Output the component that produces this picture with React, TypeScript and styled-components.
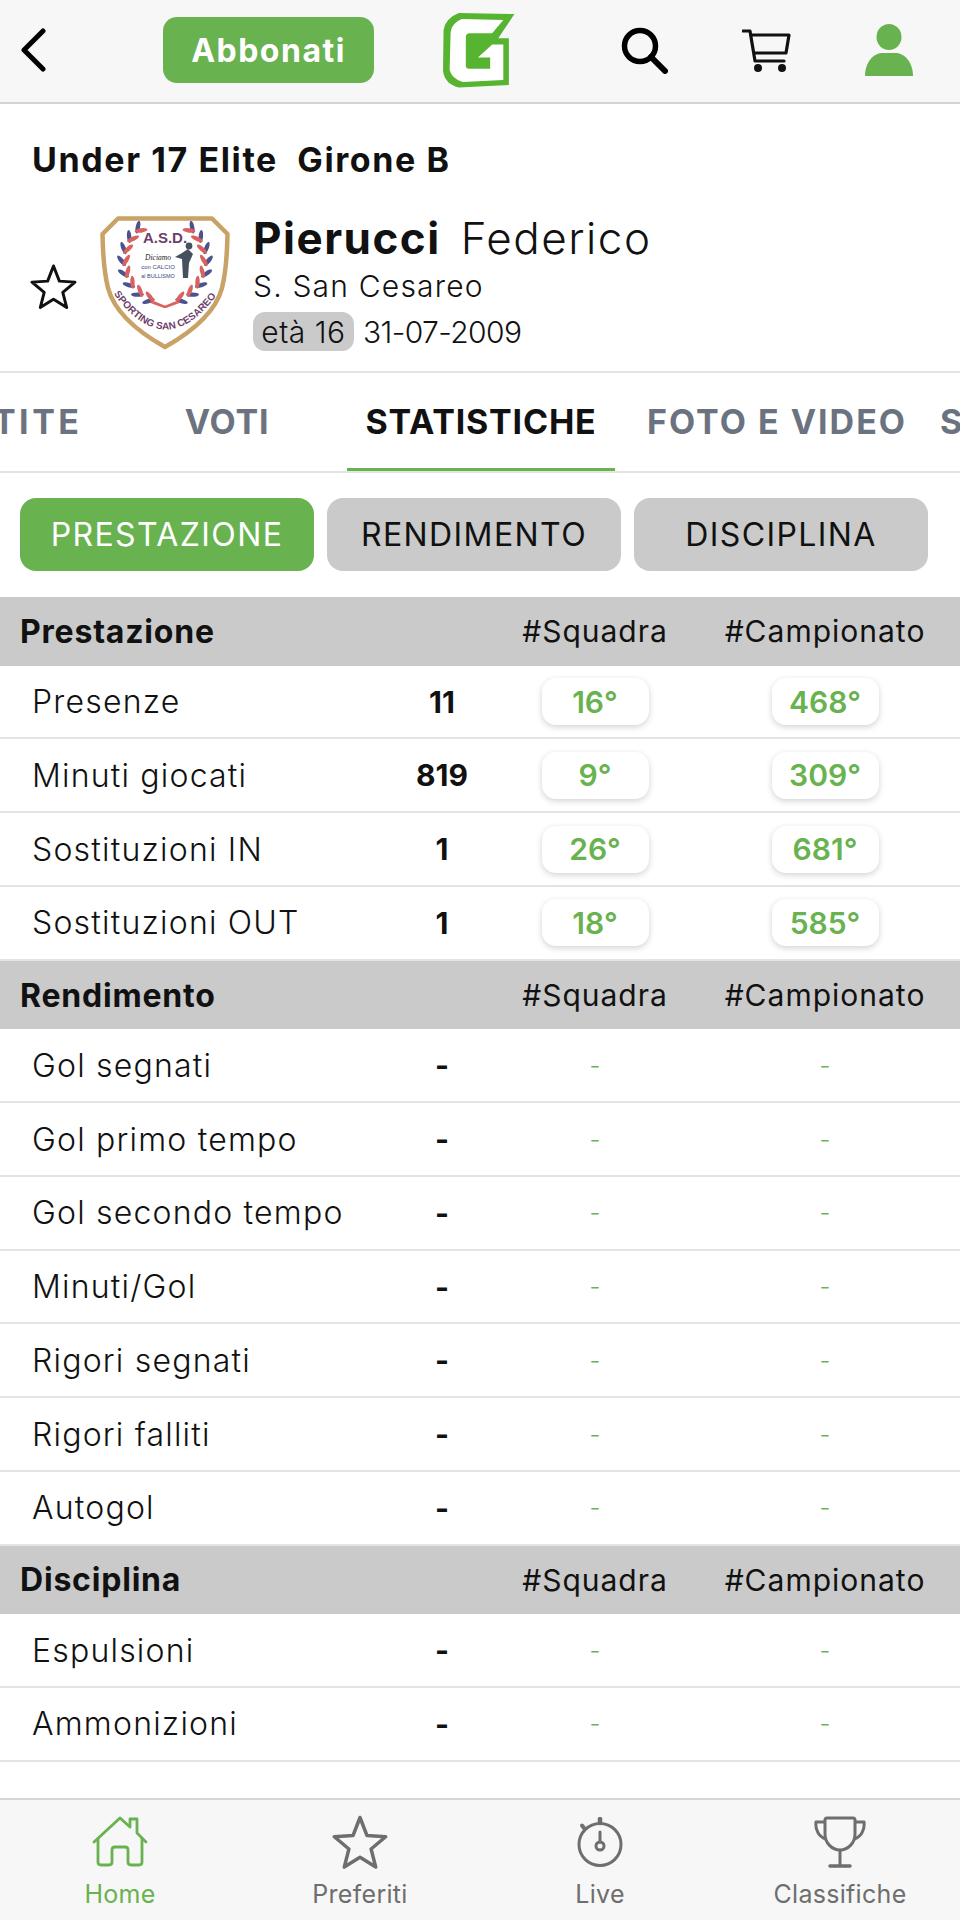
import React from 'react'
import styled, { createGlobalStyle } from 'styled-components'

const GREEN = '#69b250'
const GREY = '#cacaca'
const FONT = `Inter, "Noto Sans", "Liberation Sans", sans-serif`
const COLUMNS = '392px 100px 206px 254px'

const GlobalStyle = createGlobalStyle`
    html, body {
        margin: 0;
        padding: 0;
        background: #fff;
    }
    * {
        box-sizing: border-box;
    }
`

const Page = styled.div`
    display: flex;
    flex-direction: column;
    width: 960px;
    height: 1920px;
    overflow: hidden;
    background: #fff;
    color: #111;
    font-family: ${FONT};
`

const TopBar = styled.header`
    display: flex;
    align-items: center;
    flex: none;
    height: 104px;
    padding: 0 47px 2px 21px;
    background: #f7f7f7;
    border-bottom: 2px solid #d4d4d4;
`

const SubscribeButton = styled.div`
    display: flex;
    align-items: center;
    justify-content: center;
    width: 211px;
    height: 66px;
    margin-left: 117px;
    border-radius: 14px;
    background: ${GREEN};
    color: #fff;
    font-size: 32px;
    font-weight: 700;
    letter-spacing: 1.5px;
`

const LogoSlot = styled.div`
    display: flex;
    margin-left: 68px;
`

const TopIcons = styled.div`
    display: flex;
    align-items: center;
    gap: 74px;
    margin-left: auto;
`

const Competition = styled.h1`
    margin: 0;
    padding: 37px 0 0 32px;
    font-size: 34px;
    line-height: 38px;
    font-weight: 700;
    letter-spacing: 1.6px;
    white-space: pre;
`

const Profile = styled.section`
    display: flex;
    align-items: flex-start;
    flex: none;
    height: 194px;
    padding: 35px 0 0 30px;
    border-bottom: 2px solid #e4e4e4;
`

const StarSlot = styled.div`
    display: flex;
    margin: 49px 23px 0 0;
`

const CrestSlot = styled.div`
    display: flex;
    margin-top: 2px;
`

const Details = styled.div`
    display: flex;
    flex-direction: column;
    margin-left: 23px;
`

const PlayerName = styled.div`
    display: flex;
    gap: 20px;
    font-size: 44px;
    line-height: 48px;
    letter-spacing: 1.5px;
`

const Surname = styled.span`
    font-weight: 700;
`

const Forename = styled.span`
    font-weight: 300;
`

const TeamName = styled.div`
    margin-top: 5px;
    font-size: 30px;
    line-height: 38px;
    font-weight: 300;
    letter-spacing: 1.2px;
`

const BirthRow = styled.div`
    display: flex;
    align-items: center;
    gap: 9px;
    margin-top: 7px;
    font-size: 30px;
    font-weight: 300;
`

const AgeBadge = styled.span`
    display: flex;
    align-items: center;
    justify-content: center;
    width: 101px;
    height: 39px;
    border-radius: 12px;
    background: ${GREY};
    letter-spacing: 0.5px;
`

const BirthDate = styled.span`
    letter-spacing: -0.6px;
`

const TabStrip = styled.nav`
    display: flex;
    flex: none;
    height: 100px;
    margin-left: -109px;
    width: 1069px;
    border-bottom: 2px solid #e4e4e4;
    overflow: hidden;
`

const TabItem = styled.div<{ $active?: boolean; $wide?: boolean }>`
    display: flex;
    align-items: center;
    justify-content: center;
    flex: none;
    min-width: 240px;
    height: 100px;
    padding: ${props => props.$wide ? '2px 33px 0 32px' : '2px 18.5px 0'};
    color: ${props => props.$active ? '#111' : '#6b7280'};
    border-bottom: 5px solid ${props => props.$active ? GREEN : 'transparent'};
    font-size: 34px;
    font-weight: 700;
    letter-spacing: ${props => props.$wide ? '2px' : '0.8px'};
    white-space: nowrap;
    &:first-child {
        min-width: 216px;
        letter-spacing: 3.5px;
    }
    &:last-child {
        min-width: 0;
        padding-left: 0;
    }
`

const FilterRow = styled.div`
    display: flex;
    gap: 13px;
    flex: none;
    padding: 25px 0 26px 20px;
`

const FilterButton = styled.div<{ $active?: boolean }>`
    display: flex;
    align-items: center;
    justify-content: center;
    width: 294px;
    height: 73px;
    border-radius: 16px;
    background: ${props => props.$active ? GREEN : GREY};
    color: ${props => props.$active ? '#fff' : '#111'};
    font-size: 32px;
    font-weight: 400;
    letter-spacing: 1.4px;
`

const SectionHeader = styled.div`
    display: grid;
    grid-template-columns: ${COLUMNS};
    align-items: center;
    height: 68.7px;
    background: ${GREY};
    font-size: 30px;
    font-weight: 400;
`

const SectionTitle = styled.div`
    grid-column: 1 / 3;
    padding-left: 20px;
    font-size: 32px;
    font-weight: 700;
    letter-spacing: 0.8px;
`

const ColumnTitle = styled.div`
    text-align: center;
    letter-spacing: 1px;
`

const StatRow = styled.div`
    display: grid;
    grid-template-columns: ${COLUMNS};
    align-items: center;
    height: 73.75px;
    border-bottom: 2px solid #e4e4e4;
`

const StatLabel = styled.div`
    padding-left: 32px;
    font-size: 32px;
    font-weight: 300;
    letter-spacing: 1.2px;
    white-space: nowrap;
`

const StatValue = styled.div`
    text-align: center;
    font-size: 30px;
    font-weight: 700;
`

const RankCell = styled.div`
    display: flex;
    justify-content: center;
`

const RankPill = styled.div`
    display: flex;
    align-items: center;
    justify-content: center;
    width: 107px;
    height: 47px;
    border-radius: 14px;
    background: #fff;
    box-shadow: 0 2px 6px rgba(0, 0, 0, 0.18);
    color: ${GREEN};
    font-size: 30px;
    font-weight: 600;
`

const EmptyRank = styled.div`
    color: ${GREEN};
    font-size: 24px;
    font-weight: 300;
`

const Spacer = styled.div`
    flex: 1;
`

const BottomBar = styled.footer`
    display: grid;
    grid-template-columns: repeat(4, 240px);
    flex: none;
    height: 122px;
    background: #f7f7f7;
    border-top: 2px solid #d0d7dc;
`

const BottomItem = styled.div<{ $active?: boolean }>`
    display: flex;
    flex-direction: column;
    align-items: center;
    padding-top: 15px;
    color: ${props => props.$active ? GREEN : '#6e6e6e'};
    font-size: 25px;
    font-weight: 400;
`

const BottomIconSlot = styled.div`
    display: flex;
    align-items: center;
    height: 54px;
`

const BottomLabel = styled.div`
    margin-top: 10px;
    line-height: 30px;
    letter-spacing: 0.3px;
`

const BackIcon = () => (
    <svg width="25" height="44" viewBox="0 0 25 44" fill="none">
        <path d="M22 3 L3 22 L22 41" stroke="#000" strokeWidth="5" strokeLinecap="round" strokeLinejoin="round" />
    </svg>
)

const Logo = () => (
    <svg width="74" height="77" viewBox="13.5 7 73 76">
        <path d="M15 25 Q17 13 30 8 L85 9 L69 33 L79.5 33 L79.5 79 L30 81.5 Q16 78 14.5 65 Z" fill="#57b431" />
        <path d="M22 27 Q23 18 33 14 L74 15 L63 28 L41 28 Q37 28 37 32 L37 60 Q37 63 40 63 L61 63 L61 52 L49 52 L63 39 L74 39 L74 74 L34 76 Q23 73 21 64 Z" fill="#fff" />
    </svg>
)

const SearchIcon = () => (
    <svg width="48" height="48" viewBox="0 0 48 48" fill="none">
        <circle cx="20" cy="20" r="15.5" stroke="#000" strokeWidth="5.5" />
        <path d="M31 31 L45 45" stroke="#000" strokeWidth="6" strokeLinecap="round" />
    </svg>
)

const CartIcon = () => (
    <svg width="49" height="44" viewBox="0 0 49 44" fill="none" stroke="#111" strokeWidth="3.2" strokeLinejoin="round">
        <path d="M1 3 H8 L13 33 H42" strokeLinecap="round" />
        <path d="M9 7 H47 L44 25 H12" />
        <circle cx="16" cy="40" r="2.4" fill="#111" />
        <circle cx="40" cy="40" r="2.4" fill="#111" />
    </svg>
)

const PersonIcon = () => (
    <svg width="48" height="52" viewBox="0 0 48 52" fill={GREEN}>
        <ellipse cx="24" cy="13" rx="12.5" ry="13" />
        <path d="M0 52 C0 38 9 29 17 29 H31 C39 29 48 38 48 52 Z" />
    </svg>
)

const StarOutline = ({ size, color, width }: { size: number; color: string; width: number }) => (
    <svg width={size} height={size} viewBox="0 0 48 48" fill="none">
        <path d="M24 3 L30 18.5 L46 19.5 L33.5 30 L37.5 45.5 L24 37 L10.5 45.5 L14.5 30 L2 19.5 L18 18.5 Z"
            stroke={color} strokeWidth={width} strokeLinejoin="round" />
    </svg>
)

const HomeIcon = () => (
    <svg width="56" height="52" viewBox="0 0 56 52" fill="none" stroke={GREEN} strokeWidth="2.8" strokeLinejoin="round" strokeLinecap="round">
        <path d="M2 26 L28 2 L38 11 V3 H45 V17 L54 26" />
        <path d="M6 23 V46 Q6 49 9 49 H17 Q20 49 20 46 V34 Q20 31 23 31 H33 Q36 31 36 34 V46 Q36 49 39 49 H47 Q50 49 50 46 V23" />
    </svg>
)

const WatchIcon = () => (
    <svg width="46" height="50" viewBox="0 0 46 50" fill="none" stroke="#6e6e6e" strokeWidth="3">
        <circle cx="23" cy="27.5" r="21" />
        <path d="M23 6 V2" strokeWidth="4.5" strokeLinecap="round" />
        <path d="M7 11 L5 8.5" strokeWidth="4" strokeLinecap="round" />
        <path d="M23 15 V25" strokeLinecap="round" />
        <circle cx="23" cy="29" r="4" />
    </svg>
)

const TrophyIcon = () => (
    <svg width="52" height="52" viewBox="0 0 52 52" fill="none" stroke="#6e6e6e" strokeWidth="3" strokeLinejoin="round">
        <path d="M11 4 Q11 2 13 2 H39 Q41 2 41 4 V18 C41 27 34 34 26 34 C18 34 11 27 11 18 Z" />
        <path d="M11 6 H2 C1 14 5 21 12 23 M41 6 H50 C51 14 47 21 40 23" />
        <path d="M26 34 V49" />
        <path d="M16 50 H36" strokeWidth="3.5" strokeLinecap="round" />
    </svg>
)

// one side of the wreath, the other is the same group mirrored
const LaurelBranch = () => (
    <>
        {[0, 1, 2, 3, 4, 5, 6, 7].map(i => {
            const degrees = -47 + i * 17
            const radians = degrees * Math.PI / 180
            const x = 65 + 41 * Math.cos(radians)
            const y = 45 + 41 * Math.sin(radians)
            return (
                <g key={i} transform={`translate(${x} ${y}) rotate(${degrees})`}>
                    <ellipse cx="4" cy="0" rx="6.5" ry="2.2" fill="#48538f" transform="rotate(-55)" />
                    <ellipse cx="-4" cy="0" rx="6.5" ry="2.2" fill="#d9625f" transform="rotate(55)" />
                </g>
            )
        })}
    </>
)

const Crest = () => (
    <svg width="130" height="134" viewBox="0 0 130 134">
        <path d="M18 2.5 H112 L127.5 18 C127 45 125 60 122 72 C115 98 90 117 65 131 C40 117 15 98 8 72 C5 60 3 45 2.5 18 Z"
            fill="#fff" stroke="#c9a265" strokeWidth="4.5" strokeLinejoin="round" />
        <LaurelBranch />
        <g transform="translate(130 0) scale(-1 1)">
            <LaurelBranch />
        </g>
        <text x="65" y="27" textAnchor="middle" fontFamily="Liberation Sans, sans-serif" fontSize="15" fontWeight="700" fill="#6d3f6b">A.S.D.</text>
        <text x="58" y="44" textAnchor="middle" fontFamily="Liberation Serif, serif" fontSize="7.5" fontStyle="italic" fill="#222">Diciamo</text>
        <text x="58" y="53" textAnchor="middle" fontFamily="Liberation Sans, sans-serif" fontSize="6" fill="#3c4680">con CALCIO</text>
        <text x="58" y="62" textAnchor="middle" fontFamily="Liberation Sans, sans-serif" fontSize="5.5" fill="#3c4680">al BULLISMO</text>
        <path d="M88 33 L82 37 L75 41 L82 43 L83 62 H88 L89 47 L93 38 Z" fill="#46505e" />
        <circle cx="89" cy="30" r="3.4" fill="#46505e" />
        <path d="M54 86 L66 91 L80 86 M76 86 L64 91 L50 86" fill="none" stroke="#d9625f" strokeWidth="1.8" />
        <path id="crestArc" d="M11 74 Q65 152 119 76" fill="none" />
        <text fontFamily="Liberation Sans, sans-serif" fontSize="10" fontWeight="700" fill="#6d3f6b">
            <textPath href="#crestArc" startOffset="50%" textAnchor="middle">SPORTING SAN CESAREO</textPath>
        </text>
    </svg>
)

type StatType = {
    label: string
    value: string
    team?: string
    league?: string
}

const Section: React.FC<{ title: string; stats: Array<StatType> }> = ({ title, stats }) => (
    <>
        <SectionHeader>
            <SectionTitle>{title}</SectionTitle>
            <ColumnTitle>#Squadra</ColumnTitle>
            <ColumnTitle>#Campionato</ColumnTitle>
        </SectionHeader>
        {stats.map(stat => (
            <StatRow key={stat.label}>
                <StatLabel>{stat.label}</StatLabel>
                <StatValue>{stat.value}</StatValue>
                {[stat.team, stat.league].map((rank, index) => (
                    <RankCell key={index}>
                        {rank ? <RankPill>{rank}</RankPill> : <EmptyRank>-</EmptyRank>}
                    </RankCell>
                ))}
            </StatRow>
        ))}
    </>
)

const performance: Array<StatType> = [
    { label: 'Presenze', value: '11', team: '16°', league: '468°' },
    { label: 'Minuti giocati', value: '819', team: '9°', league: '309°' },
    { label: 'Sostituzioni IN', value: '1', team: '26°', league: '681°' },
    { label: 'Sostituzioni OUT', value: '1', team: '18°', league: '585°' }
]

const results: Array<StatType> = [
    'Gol segnati', 'Gol primo tempo', 'Gol secondo tempo', 'Minuti/Gol', 'Rigori segnati', 'Rigori falliti', 'Autogol'
].map(label => ({ label, value: '-' }))

const discipline: Array<StatType> = ['Espulsioni', 'Ammonizioni'].map(label => ({ label, value: '-' }))

const App: React.FC = () => (
    <Page>
        <GlobalStyle />
        <TopBar>
            <BackIcon />
            <SubscribeButton>Abbonati</SubscribeButton>
            <LogoSlot><Logo /></LogoSlot>
            <TopIcons>
                <SearchIcon />
                <CartIcon />
                <PersonIcon />
            </TopIcons>
        </TopBar>
        <Competition>Under 17 Elite  Girone B</Competition>
        <Profile>
            <StarSlot><StarOutline size={47} color="#111" width={3} /></StarSlot>
            <CrestSlot><Crest /></CrestSlot>
            <Details>
                <PlayerName>
                    <Surname>Pierucci</Surname>
                    <Forename>Federico</Forename>
                </PlayerName>
                <TeamName>S. San Cesareo</TeamName>
                <BirthRow>
                    <AgeBadge>età 16</AgeBadge>
                    <BirthDate>31-07-2009</BirthDate>
                </BirthRow>
            </Details>
        </Profile>
        <TabStrip>
            <TabItem>PARTITE</TabItem>
            <TabItem>VOTI</TabItem>
            <TabItem $active>STATISTICHE</TabItem>
            <TabItem $wide>FOTO E VIDEO</TabItem>
            <TabItem>SCHEDA</TabItem>
        </TabStrip>
        <FilterRow>
            <FilterButton $active>PRESTAZIONE</FilterButton>
            <FilterButton>RENDIMENTO</FilterButton>
            <FilterButton>DISCIPLINA</FilterButton>
        </FilterRow>
        <Section title="Prestazione" stats={performance} />
        <Section title="Rendimento" stats={results} />
        <Section title="Disciplina" stats={discipline} />
        <Spacer />
        <BottomBar>
            <BottomItem $active>
                <BottomIconSlot><HomeIcon /></BottomIconSlot>
                <BottomLabel>Home</BottomLabel>
            </BottomItem>
            <BottomItem>
                <BottomIconSlot><StarOutline size={56} color="#6e6e6e" width={3} /></BottomIconSlot>
                <BottomLabel>Preferiti</BottomLabel>
            </BottomItem>
            <BottomItem>
                <BottomIconSlot><WatchIcon /></BottomIconSlot>
                <BottomLabel>Live</BottomLabel>
            </BottomItem>
            <BottomItem>
                <BottomIconSlot><TrophyIcon /></BottomIconSlot>
                <BottomLabel>Classifiche</BottomLabel>
            </BottomItem>
        </BottomBar>
    </Page>
)

export default App
